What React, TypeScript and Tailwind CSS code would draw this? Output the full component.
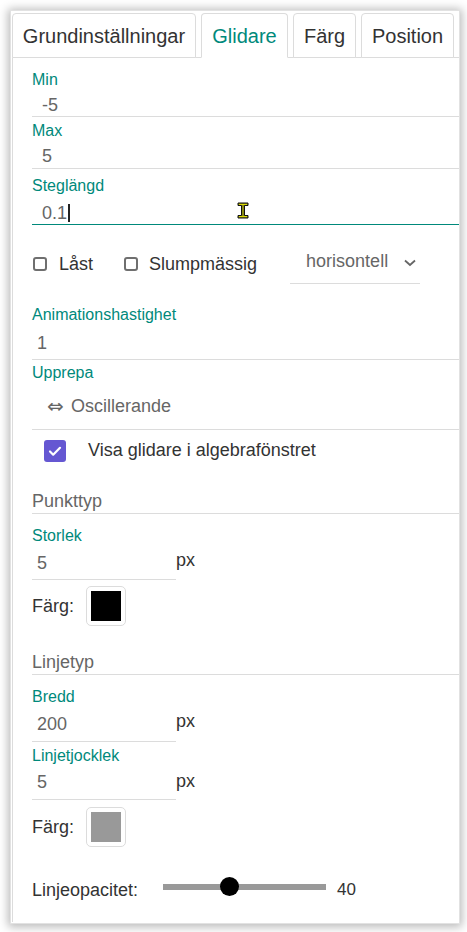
import React from 'react';

const font = { fontFamily: '"Liberation Sans", Arial, sans-serif' };

function Tab({ label, active, w }: { label: string; active?: boolean; w: string }) {
  return (
    <div
      className={`${w} -mb-[1px] flex h-[45px] items-center justify-center rounded-t-[4px] border border-[#dcdcdc] text-[20px] leading-[24px] ${
        active ? 'border-b-white bg-white text-[#00897b]' : 'bg-white text-[#333]'
      }`}
    >
      {label}
    </div>
  );
}

function Box({ checked }: { checked?: boolean }) {
  if (checked) {
    return (
      <div className="flex h-[22px] w-[22px] items-center justify-center rounded-[3px] bg-[#6557d2]">
        <svg width="14" height="14" viewBox="0 0 14 14" fill="none">
          <path d="M2 7.5l3.2 3.2L12 3.8" stroke="white" strokeWidth="2.2" strokeLinecap="round" strokeLinejoin="round" />
        </svg>
      </div>
    );
  }
  return <div className="h-[14px] w-[14px] rounded-[3px] border-2 border-[#6f6f6f]" />;
}

function Swatch({ color }: { color: string }) {
  return (
    <div className="rounded-[5px] border border-[#dcdcdc] p-[4px]">
      <div className={`h-[30px] w-[30px] ${color}`} />
    </div>
  );
}

export default function App() {
  return (
    <div className="min-h-[932px] w-[467px] bg-white pt-[10px] pl-[10px]" style={font}>
      <div className="relative h-[914px] w-[450px] border border-[#e2e2e2] bg-white pl-[1px] pt-[2px] shadow-[0_1px_9px_2px_rgba(0,0,0,0.28)]">
        {/* Tabs */}
        <div className="flex gap-[5px] border-b border-[#dcdcdc]">
          <Tab label="Grundinställningar" w="w-[184px]" />
          <Tab label="Glidare" w="w-[87px]" active />
          <Tab label="Färg" w="w-[63px]" />
          <Tab label="Position" w="w-[93px]" />
        </div>

        {/* Content */}
        <div className="h-[864px] border-l border-[#dcdcdc] pl-[19px]">
          {/* Min */}
          <div className="border-b border-[#dcdcdc] pt-[12px]">
            <div className="h-[20px] text-[16px] leading-[20px] text-[#00897b]">Min</div>
            <div className="mt-[5px] h-[21px] pl-[10px] text-[18px] leading-[21px] text-[#666]">-5</div>
          </div>
          {/* Max */}
          <div className="border-b border-[#dcdcdc] pt-[4px]">
            <div className="h-[20px] text-[16px] leading-[20px] text-[#00897b]">Max</div>
            <div className="mt-[4px] h-[23px] pl-[10px] text-[18px] leading-[23px] text-[#666]">5</div>
          </div>
          {/* Steglängd */}
          <div className="relative border-b border-[#00897b] pt-[7px]">
            <div className="h-[20px] text-[16px] leading-[20px] text-[#00897b]">Steglängd</div>
            <div className="mt-[6px] flex h-[22px] items-center pl-[10px] text-[18px] leading-[22px] text-[#666]">
              0.1
              <span className="ml-[1px] inline-block h-[18px] w-[2px] bg-[#222]" />
            </div>
            {/* mouse cursor */}
            <svg className="absolute left-[205px] top-[33px]" width="12" height="17" viewBox="0 0 12 17">
              <path
                d="M1 1h10v2.5H7.5v10H11V16H1v-2.5h3.5v-10H1z"
                fill="#8a8a14"
                stroke="#111"
                strokeWidth="1"
              />
              <path d="M2 2h8v0.8H2zM2 14.2h8v0.8H2z" fill="#f5f500" />
            </svg>
          </div>

          {/* Låst / Slumpmässig / horisontell */}
          <div className="flex h-[60px] items-start text-[18px] text-[#333]">
            <label className="mt-[28px] flex h-[22px] items-center pl-[1px] leading-[22px]">
              <Box />
              <span className="ml-[12px]">Låst</span>
            </label>
            <label className="ml-[31px] mt-[28px] flex h-[22px] items-center leading-[22px]">
              <Box />
              <span className="ml-[11px]">Slumpmässig</span>
            </label>
            <div className="ml-[33px] mt-[25px] flex w-[130px] items-start border-b border-[#dcdcdc] pb-[11px] pl-[16px]">
              <span className="h-[22px] leading-[22px] text-[#666]">horisontell</span>
              <svg className="ml-[16px] mt-[9px]" width="12" height="8" viewBox="0 0 12 8" fill="none">
                <path d="M1 1.5l5 4.5 5-4.5" stroke="#666" strokeWidth="1.8" />
              </svg>
            </div>
          </div>

          {/* Animationshastighet */}
          <div className="border-b border-[#dcdcdc] pt-[20px] pb-[5px]">
            <div className="h-[20px] text-[16px] leading-[20px] text-[#00897b]">Animationshastighet</div>
            <div className="mt-[7px] h-[22px] pl-[5px] text-[18px] leading-[22px] text-[#666]">1</div>
          </div>
          {/* Upprepa */}
          <div className="border-b border-[#dcdcdc] pt-[3px] pb-[12px]">
            <div className="h-[20px] text-[16px] leading-[20px] text-[#00897b]">Upprepa</div>
            <div className="mt-[12px] flex h-[22px] items-center pl-[15px] text-[18px] leading-[22px] text-[#666]">
              <span className="w-[24px]" style={{ fontFamily: '"DejaVu Sans", sans-serif', fontSize: 20 }}>
                ⇔
              </span>
              <span>Oscillerande</span>
            </div>
          </div>

          {/* Visa glidare */}
          <div className="flex items-start pt-[10px] pl-[12px]">
            <Box checked />
            <span className="ml-[22px] h-[20px] text-[18px] leading-[20px] text-[#333]">Visa glidare i algebrafönstret</span>
          </div>

          {/* Punkttyp */}
          <div className="mt-[28px] border-b border-[#dcdcdc] pb-[1px]">
            <div className="h-[22px] text-[18px] leading-[22px] text-[#666]">Punkttyp</div>
          </div>
          <div className="flex items-start">
            <div className="w-[144px] border-b border-[#dcdcdc] pt-[12px] pb-[5px]">
              <div className="h-[20px] text-[16px] leading-[20px] text-[#00897b]">Storlek</div>
              <div className="mt-[6px] h-[22px] pl-[5px] text-[18px] leading-[22px] text-[#666]">5</div>
            </div>
            <span className="mt-[35px] h-[22px] text-[18px] leading-[22px] text-[#333]">px</span>
          </div>
          <div className="mt-[6px] flex items-center gap-[12px] text-[18px] leading-[22px] text-[#333]">
            <span>Färg:</span>
            <Swatch color="bg-black" />
          </div>

          {/* Linjetyp */}
          <div className="mt-[25px] border-b border-[#dcdcdc] pb-[1px]">
            <div className="h-[22px] text-[18px] leading-[22px] text-[#666]">Linjetyp</div>
          </div>
          <div className="flex items-start">
            <div className="w-[144px] border-b border-[#dcdcdc] pt-[12px] pb-[6px]">
              <div className="h-[20px] text-[16px] leading-[20px] text-[#00897b]">Bredd</div>
              <div className="mt-[6px] h-[22px] pl-[5px] text-[18px] leading-[22px] text-[#666]">200</div>
            </div>
            <span className="mt-[35px] h-[22px] text-[18px] leading-[22px] text-[#333]">px</span>
          </div>
          <div className="flex items-start">
            <div className="w-[144px] border-b border-[#dcdcdc] pt-[4px] pb-[6px]">
              <div className="h-[20px] text-[16px] leading-[20px] text-[#00897b]">Linjetjocklek</div>
              <div className="mt-[5px] h-[22px] pl-[5px] text-[18px] leading-[22px] text-[#666]">5</div>
            </div>
            <span className="mt-[28px] h-[22px] text-[18px] leading-[22px] text-[#333]">px</span>
          </div>
          <div className="mt-[7px] flex items-center gap-[12px] text-[18px] leading-[22px] text-[#333]">
            <span>Färg:</span>
            <Swatch color="bg-[#999]" />
          </div>

          {/* Linjeopacitet */}
          <div className="mt-[32px] flex items-start text-[18px] leading-[22px] text-[#333]">
            <span className="w-[131px]">Linjeopacitet:</span>
            <div className="relative -mt-[2px] h-[20px] w-[163px]">
              <div className="absolute left-0 right-0 top-[7px] h-[6px] bg-[#999]" />
              <div className="absolute left-[57px] top-0 h-[19px] w-[19px] rounded-full bg-black" />
            </div>
            <span className="ml-[11px] text-[17px]">40</span>
          </div>
        </div>
      </div>
    </div>
  );
}
